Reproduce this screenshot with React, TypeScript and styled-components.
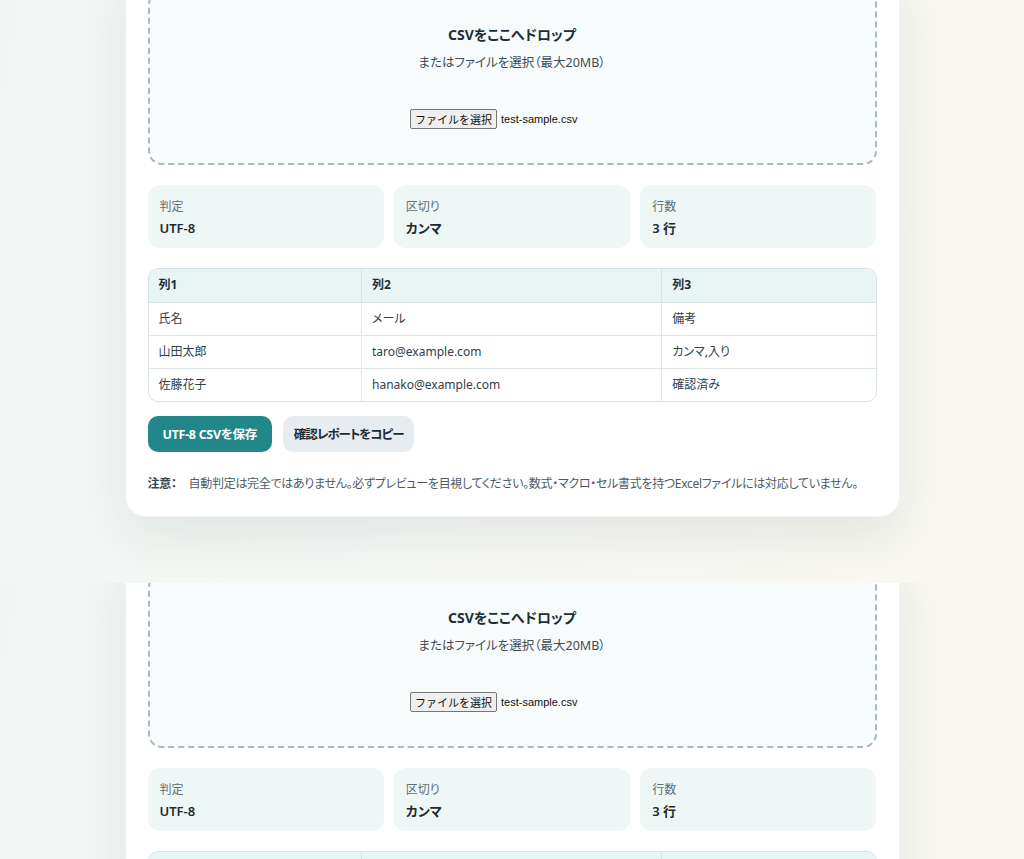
import React from 'react';
import styled, { createGlobalStyle } from 'styled-components';

const GlobalStyle = createGlobalStyle`
  * { box-sizing: border-box; }
  body {
    margin: 0;
    font-family: "Noto Sans", "Noto Sans CJK JP", sans-serif;
    font-feature-settings: "palt";
    color: #1f2d36;
    background: #f5f7f3;
  }
`;

const Shot = styled.section<{ $height: number }>`
  height: ${p => p.$height}px;
  overflow: hidden;
  background: linear-gradient(100deg, #f1f6f4 0%, #f6f8f5 45%, #f9f7f1 100%);
`;

const Card = styled.div`
  max-width: 775px;
  margin: -35px auto 0;
  padding: 24px 22px 22px;
  background: #fff;
  border: 1px solid rgba(20, 40, 40, 0.06);
  border-radius: 20px;
  box-shadow: 0 20px 50px rgba(30, 50, 50, 0.09);
`;

const DropZone = styled.div`
  padding: 33px 20px 34px;
  border: 2px dashed #a3bbc1;
  border-radius: 14px;
  background: #f7fbfb;
  text-align: center;
`;

const DropTitle = styled.div`
  font-size: 14px;
  line-height: 20px;
  font-weight: 700;
  color: #1f2d36;
`;

const DropHint = styled.div`
  margin-top: 8px;
  font-size: 12.5px;
  line-height: 20px;
  color: #3f4b53;
`;

const FileRow = styled.div`
  margin-top: 36px;
  display: flex;
  justify-content: center;
`;

const FileInput = styled.div`
  width: 204px;
  display: flex;
  align-items: center;
  gap: 4px;
`;

const FileButton = styled.button`
  height: 20px;
  padding: 0 4px;
  border: 1px solid #767676;
  border-radius: 2px;
  background: #efefef;
  font-family: "Noto Sans CJK JP", sans-serif;
  font-feature-settings: normal;
  font-size: 11px;
  line-height: 18px;
  color: #111;
`;

const FileName = styled.span`
  font-family: "Liberation Sans", Arial, sans-serif;
  font-size: 11px;
  color: #111;
`;

const Stats = styled.div`
  margin-top: 20px;
  display: grid;
  grid-template-columns: repeat(3, 1fr);
  gap: 10px;
`;

const Stat = styled.div`
  padding: 13px 12px 10px;
  border-radius: 12px;
  background: #eef6f6;
`;

const StatLabel = styled.div`
  font-size: 12px;
  line-height: 18px;
  color: #5f6e75;
`;

const StatValue = styled.div`
  margin-top: 2px;
  font-size: 13px;
  line-height: 20px;
  font-weight: 600;
  color: #1d2a31;
`;

const TableWrap = styled.div`
  margin-top: 20px;
  border: 1px solid #d6e2e5;
  border-radius: 10px;
  overflow: hidden;
`;

const Table = styled.table`
  width: 100%;
  border-collapse: collapse;
  font-size: 12px;
  line-height: 16px;
`;

const Th = styled.th<{ $width?: string }>`
  width: ${p => p.$width || 'auto'};
  height: 33px;
  padding: 0 10px;
  text-align: left;
  font-weight: 700;
  color: #1f2b33;
  background: #e9f4f5;
  border-bottom: 1px solid #d9e4e6;
  & + & { border-left: 1px solid #d9e4e6; }
`;

const Td = styled.td`
  padding: 8px 10px;
  color: #33404a;
  border-top: 1px solid #dfe7e9;
  & + & { border-left: 1px solid #dfe7e9; }
`;

const Actions = styled.div`
  margin-top: 14px;
  display: flex;
  gap: 11px;
`;

const Button = styled.button<{ $primary?: boolean }>`
  height: 36px;
  padding: 0 ${p => (p.$primary ? 15 : 11)}px;
  border: none;
  border-radius: 10px;
  font-family: inherit;
  font-feature-settings: "palt";
  font-size: 12.5px;
  letter-spacing: ${p => (p.$primary ? '-0.3px' : '-1px')};
  font-weight: 700;
  color: ${p => (p.$primary ? '#fff' : '#1f2b33')};
  background: ${p => (p.$primary ? '#22878a' : '#e6ecf0')};
`;

const Note = styled.p`
  margin: 22px 0 0;
  font-size: 12px;
  line-height: 20px;
  letter-spacing: -0.3px;
  color: #4d5a63;
  white-space: nowrap;
`;

const NoteLead = styled.strong`
  margin-right: 12px;
  color: #3a4750;
`;

const rows = [
  ['氏名', 'メール', '備考'],
  ['山田太郎', 'taro@example.com', 'カンマ,入り'],
  ['佐藤花子', 'hanako@example.com', '確認済み'],
];

const stats = [
  { label: '判定', value: 'UTF-8' },
  { label: '区切り', value: 'カンマ' },
  { label: '行数', value: '3 行' },
];

const Screen: React.FC = () => (
  <Card>
    <DropZone>
      <DropTitle>CSVをここへドロップ</DropTitle>
      <DropHint>またはファイルを選択（最大20MB）</DropHint>
      <FileRow>
        <FileInput>
          <FileButton type="button">ファイルを選択</FileButton>
          <FileName>test-sample.csv</FileName>
        </FileInput>
      </FileRow>
    </DropZone>

    <Stats>
      {stats.map(s => (
        <Stat key={s.label}>
          <StatLabel>{s.label}</StatLabel>
          <StatValue>{s.value}</StatValue>
        </Stat>
      ))}
    </Stats>

    <TableWrap>
      <Table>
        <thead>
          <tr>
            <Th $width="29.3%">列1</Th>
            <Th $width="41.3%">列2</Th>
            <Th>列3</Th>
          </tr>
        </thead>
        <tbody>
          {rows.map(r => (
            <tr key={r[0]}>
              {r.map(c => (
                <Td key={c}>{c}</Td>
              ))}
            </tr>
          ))}
        </tbody>
      </Table>
    </TableWrap>

    <Actions>
      <Button $primary>UTF-8 CSVを保存</Button>
      <Button>確認レポートをコピー</Button>
    </Actions>

    <Note>
      <NoteLead>注意：</NoteLead>
      自動判定は完全ではありません。必ずプレビューを目視してください。数式・マクロ・セル書式を持つExcelファイルには対応していません。
    </Note>
  </Card>
);

const App: React.FC = () => (
  <>
    <GlobalStyle />
    <Shot $height={583}>
      <Screen />
    </Shot>
    <Shot $height={276}>
      <Screen />
    </Shot>
  </>
);

export default App;
